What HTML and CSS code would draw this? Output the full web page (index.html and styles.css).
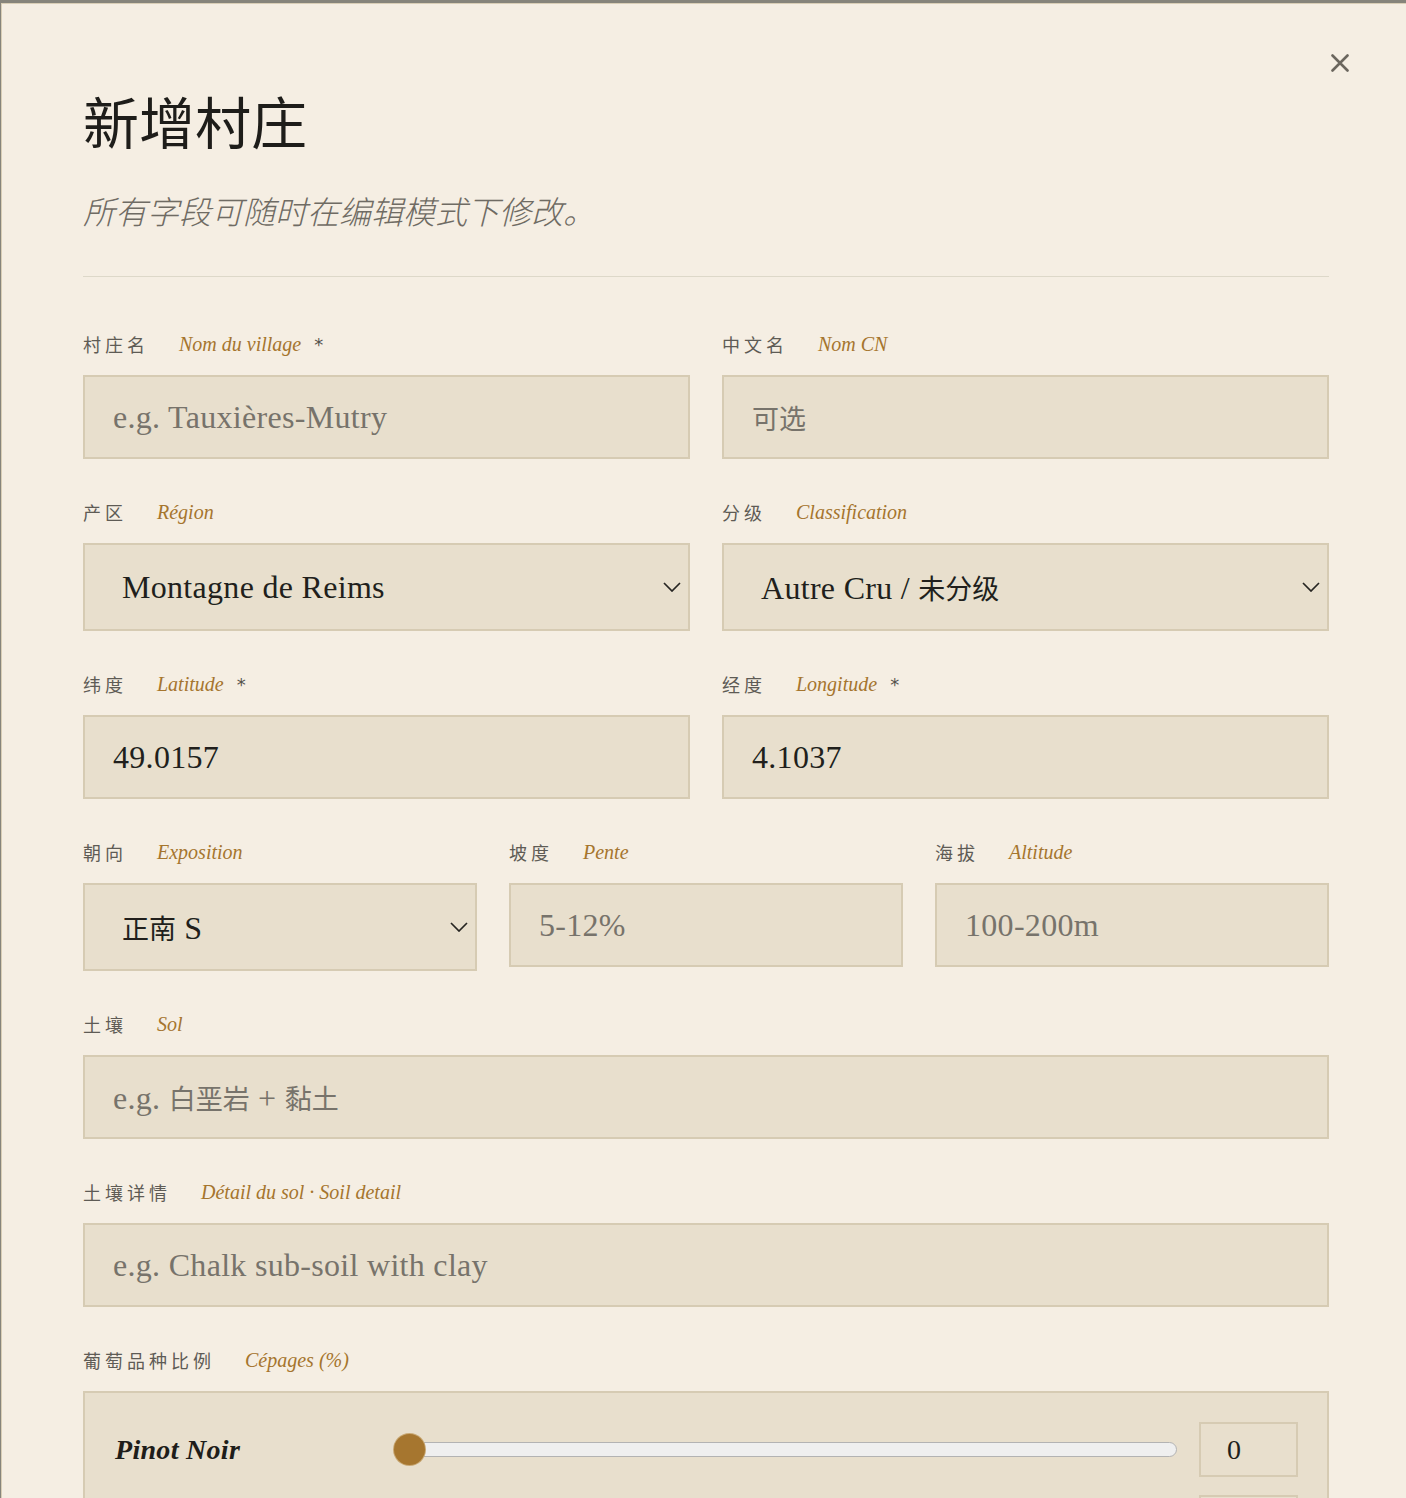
FILE: index.html
```html
<!DOCTYPE html>
<html lang="zh">
<head>
<meta charset="utf-8">
<title>新增村庄</title>
<link rel="stylesheet" href="styles.css">
</head>
<body>
<div class="overlay">
  <div class="modal">
    <button class="close" aria-label="close">
      <svg width="18" height="18" viewBox="0 0 18 18"><path d="M1.5 1.5 L16.5 16.5 M16.5 1.5 L1.5 16.5" stroke="#6b665e" stroke-width="2.6" stroke-linecap="round" fill="none"/></svg>
    </button>
    <h1 class="title">新增村庄</h1>
    <p class="subtitle">所有字段可随时在编辑模式下修改。</p>
    <hr class="divider">

    <div class="row two">
      <div class="field">
        <div class="label"><span class="cn">村庄名</span><span class="fr">Nom du village</span><span class="req">*</span></div>
        <div class="input placeholder">e.g. Tauxières-Mutry</div>
      </div>
      <div class="field">
        <div class="label"><span class="cn">中文名</span><span class="fr">Nom CN</span></div>
        <div class="input placeholder"><span class="zh">可选</span></div>
      </div>
    </div>

    <div class="row two">
      <div class="field">
        <div class="label"><span class="cn">产区</span><span class="fr">Région</span></div>
        <div class="select"><span>Montagne de Reims</span>
          <svg class="chev" width="18" height="10" viewBox="0 0 18 10"><path d="M1 1 L9 9 L17 1" stroke="#262522" stroke-width="1.7" fill="none"/></svg></div>
      </div>
      <div class="field">
        <div class="label"><span class="cn">分级</span><span class="fr">Classification</span></div>
        <div class="select"><span>Autre Cru / <span class="zh">未分级</span></span>
          <svg class="chev" width="18" height="10" viewBox="0 0 18 10"><path d="M1 1 L9 9 L17 1" stroke="#262522" stroke-width="1.7" fill="none"/></svg></div>
      </div>
    </div>

    <div class="row two">
      <div class="field">
        <div class="label"><span class="cn">纬度</span><span class="fr">Latitude</span><span class="req">*</span></div>
        <div class="input value">49.0157</div>
      </div>
      <div class="field">
        <div class="label"><span class="cn">经度</span><span class="fr">Longitude</span><span class="req">*</span></div>
        <div class="input value">4.1037</div>
      </div>
    </div>

    <div class="row three">
      <div class="field">
        <div class="label"><span class="cn">朝向</span><span class="fr">Exposition</span></div>
        <div class="select"><span><span class="zh">正南</span> S</span>
          <svg class="chev" width="18" height="10" viewBox="0 0 18 10"><path d="M1 1 L9 9 L17 1" stroke="#262522" stroke-width="1.7" fill="none"/></svg></div>
      </div>
      <div class="field">
        <div class="label"><span class="cn">坡度</span><span class="fr">Pente</span></div>
        <div class="input placeholder">5-12%</div>
      </div>
      <div class="field">
        <div class="label"><span class="cn">海拔</span><span class="fr">Altitude</span></div>
        <div class="input placeholder">100-200m</div>
      </div>
    </div>

    <div class="row">
      <div class="field">
        <div class="label"><span class="cn">土壤</span><span class="fr">Sol</span></div>
        <div class="input placeholder"><span>e.g.&nbsp;<span class="zh">白垩岩</span> + <span class="zh">黏土</span></span></div>
      </div>
    </div>

    <div class="row">
      <div class="field">
        <div class="label"><span class="cn">土壤详情</span><span class="fr">Détail du sol · Soil detail</span></div>
        <div class="input placeholder">e.g. Chalk sub-soil with clay</div>
      </div>
    </div>

    <div class="row">
      <div class="field">
        <div class="label"><span class="cn">葡萄品种比例</span><span class="fr">Cépages (%)</span></div>
        <div class="grapes">
          <div class="grape">
            <span class="gname">Pinot Noir</span>
            <div class="slider"><div class="track"></div><div class="thumb"></div></div>
            <div class="num">0</div>
          </div>
          <div class="grape">
            <span class="gname">Chardonnay</span>
            <div class="slider"><div class="track"></div><div class="thumb"></div></div>
            <div class="num">0</div>
          </div>
          <div class="grape">
            <span class="gname">Meunier</span>
            <div class="slider"><div class="track"></div><div class="thumb"></div></div>
            <div class="num">0</div>
          </div>
        </div>
      </div>
    </div>
  </div>
</div>
</body>
</html>
```

FILE: styles.css
```css
html, body {
  margin: 0;
  padding: 0;
}
body {
  background: #86847b;
  width: 1406px;
  height: 1498px;
  overflow: hidden;
  font-family: "Liberation Serif", "Noto Sans CJK SC", serif;
}
.overlay {
  padding: 3px 0 0 1px;
}
.modal {
  position: relative;
  box-sizing: border-box;
  width: 1410px;
  min-height: 1600px;
  background: #f5eee3;
  border: 1px solid #d9ceb6;
  padding: 88px 81px 0 81px;
}
.close {
  position: absolute;
  top: 50px;
  right: 61px;
  width: 18px;
  height: 18px;
  padding: 0;
  border: 0;
  background: none;
  display: flex;
}
.title {
  margin: 0;
  font-family: "Liberation Serif", "Noto Sans CJK SC", serif;
  font-size: 56px;
  line-height: 67px;
  font-weight: 400;
  color: #1e1d1a;
}
.subtitle {
  margin: 30px 0 0 0;
  font-family: "Noto Sans CJK SC", sans-serif;
  font-style: italic;
  font-size: 32px;
  line-height: 42px;
  color: #6f6b63;
  font-weight: 300;
}
.divider {
  margin: 45px 0 55px 0;
  border: 0;
  height: 1px;
  background: #ddd8c9;
}
.row {
  margin-bottom: 41px;
}
.row.two {
  display: grid;
  grid-template-columns: 1fr 1fr;
  column-gap: 32px;
  align-items: start;
}
.row.three {
  display: grid;
  grid-template-columns: 1fr 1fr 1fr;
  column-gap: 32px;
  align-items: start;
}
.label {
  display: flex;
  align-items: center;
  height: 24px;
  margin-bottom: 19px;
  white-space: nowrap;
}
.label .cn {
  font-family: "Noto Sans CJK SC", sans-serif;
  font-size: 18px;
  letter-spacing: 4px;
  color: #5e5b55;
  margin-right: 30px;
}
.label .fr {
  font-family: "Liberation Serif", serif;
  font-style: italic;
  font-size: 20px;
  color: #a5752e;
}
.label .req {
  font-family: "DejaVu Sans", sans-serif;
  font-size: 18px;
  color: #55524c;
  margin-left: 13px;
}
.input {
  box-sizing: border-box;
  height: 84px;
  background: #e8dfcd;
  border: 2px solid #d6cbb3;
  padding: 0 28px;
  display: flex;
  align-items: center;
  font-size: 32px;
  letter-spacing: 0.3px;
}
.zh {
  font-family: "Noto Sans CJK SC", sans-serif;
  font-size: 27px;
  font-weight: 400;
  letter-spacing: 0;
}
.input.placeholder {
  color: #77736b;
}
.input.value {
  color: #211f1c;
}
.select {
  box-sizing: border-box;
  height: 88px;
  background: #e8dfcd;
  border: 2px solid #d6cbb3;
  padding: 0 7px 0 37px;
  display: flex;
  align-items: center;
  justify-content: space-between;
  font-size: 32px;
  letter-spacing: 0.3px;
  color: #211f1c;
}
.chev {
  display: block;
}
.grapes {
  box-sizing: border-box;
  background: #e8dfcd;
  border: 2px solid #d6cbb3;
  padding: 29px 29px 28px 30px;
  display: flex;
  flex-direction: column;
  gap: 18px;
}
.grape {
  display: grid;
  grid-template-columns: 258px 1fr 99px;
  column-gap: 22px;
  align-items: center;
}
.gname {
  font-size: 28px;
  font-style: italic;
  font-weight: 700;
  letter-spacing: 0.3px;
  color: #1e1d1a;
}
.slider {
  position: relative;
  height: 32px;
  display: flex;
  align-items: center;
}
.track {
  flex: 1;
  box-sizing: border-box;
  height: 15px;
  background: #efefef;
  border: 1.5px solid #b3b3b3;
  border-radius: 8px;
}
.thumb {
  position: absolute;
  left: -1px;
  top: 0;
  width: 31px;
  height: 31px;
  border-radius: 50%;
  background: #a6762f;
  box-shadow: 0 0 0 1px #c8a874;
}
.num {
  box-sizing: border-box;
  height: 55px;
  border: 2px solid #d6cbb3;
  padding: 0 26px;
  display: flex;
  align-items: center;
  font-size: 28px;
  color: #211f1c;
}
```
